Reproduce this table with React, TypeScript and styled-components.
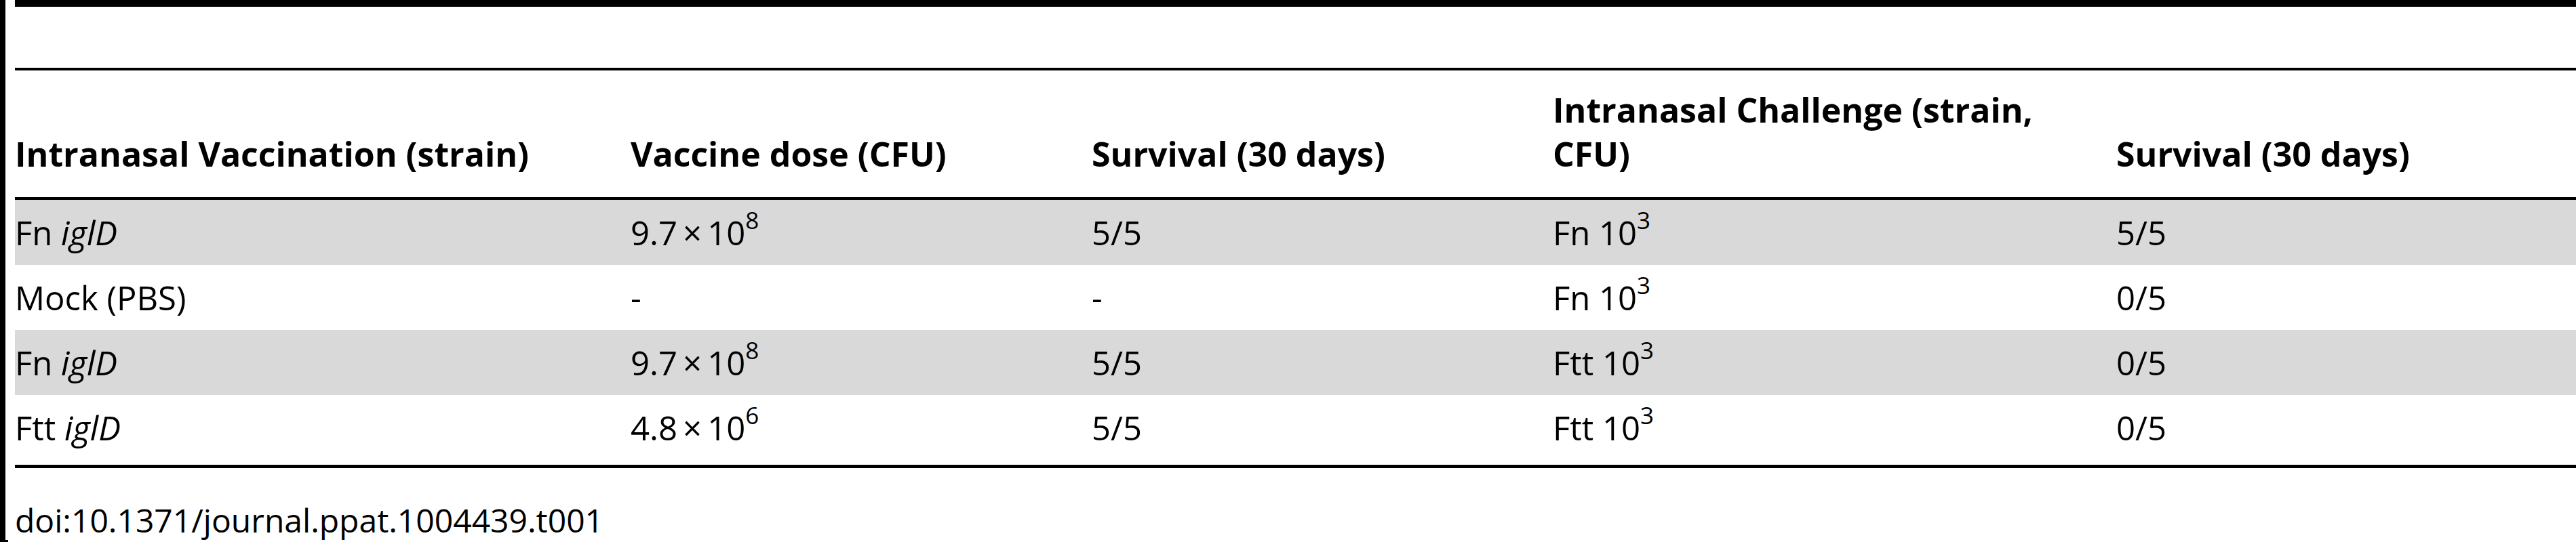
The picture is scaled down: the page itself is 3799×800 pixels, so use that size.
import React from "react";
import styled, { createGlobalStyle } from "styled-components";

const GlobalStyle = createGlobalStyle`
  html, body {
    margin: 0;
    padding: 0;
    background: #ffffff;
    overflow: hidden;
  }
  body {
    font-family: "Open Sans", "Noto Sans", "Liberation Sans", sans-serif;
    color: #000000;
  }
`;

const Page = styled.div`
  display: flex;
  width: 3799px;
  height: 800px;
  overflow: hidden;
  background: #ffffff;
`;

const LeftRule = styled.div`
  display: flex;
  flex-direction: column;
  flex-shrink: 0;
  width: 12px;
  height: 800px;
`;

const RuleBar = styled.div`
  flex: 1;
  width: 8px;
  background: #000000;
`;

const RuleFoot = styled.div`
  width: 12px;
  height: 3px;
  background: #000000;
`;

const Content = styled.div`
  flex: 1;
  display: flex;
  flex-direction: column;
  padding-left: 10px;
  min-width: 0;
`;

const HRule = styled.div<{ $h: number; $gapAfter?: number }>`
  height: ${(p) => p.$h}px;
  background: #000000;
  margin-bottom: ${(p) => p.$gapAfter ?? 0}px;
  flex-shrink: 0;
`;

const cols = "908px 680px 680px 831px 1fr";

const HeaderRow = styled.div`
  display: grid;
  grid-template-columns: ${cols};
  align-items: end;
  height: 193px;
  border-bottom: 4px solid #000000;
`;

const HeaderCell = styled.div<{ $wrap?: boolean }>`
  font-size: 50px;
  font-weight: 700;
  line-height: 65px;
  padding-bottom: 31px;
  padding-right: 100px;
  white-space: ${(p) => (p.$wrap ? "normal" : "nowrap")};
`;

const Body = styled.div`
  display: flex;
  flex-direction: column;
  padding-bottom: 7px;
`;

const BodyRow = styled.div<{ $shaded: boolean }>`
  display: grid;
  grid-template-columns: ${cols};
  align-items: center;
  height: 96px;
  background: ${(p) => (p.$shaded ? "#d9d9d9" : "#ffffff")};
`;

const BodyCell = styled.div`
  font-size: 49px;
  line-height: 49px;
  white-space: nowrap;
`;

const Gene = styled.i`
  font-style: italic;
`;

const Sup = styled.sup`
  font-size: 35px;
  line-height: 0;
  vertical-align: 24px;
`;

const Doi = styled.div`
  margin-top: 45px;
  font-size: 48px;
  line-height: 64px;
  white-space: nowrap;
`;

const Times = "\u2009\u00d7\u2009";

type Row = { shaded: boolean; cells: React.ReactNode[] };

const headers: { label: string; wrap?: boolean }[] = [
  { label: "Intranasal Vaccination (strain)" },
  { label: "Vaccine dose (CFU)" },
  { label: "Survival (30 days)" },
  { label: "Intranasal Challenge (strain, CFU)", wrap: true },
  { label: "Survival (30 days)" },
];

const rows: Row[] = [
  {
    shaded: true,
    cells: [
      <>Fn <Gene>iglD</Gene></>,
      <>9.7{Times}10<Sup>8</Sup></>,
      "5/5",
      <>Fn 10<Sup>3</Sup></>,
      "5/5",
    ],
  },
  {
    shaded: false,
    cells: ["Mock (PBS)", "-", "-", <>Fn 10<Sup>3</Sup></>, "0/5"],
  },
  {
    shaded: true,
    cells: [
      <>Fn <Gene>iglD</Gene></>,
      <>9.7{Times}10<Sup>8</Sup></>,
      "5/5",
      <>Ftt 10<Sup>3</Sup></>,
      "0/5",
    ],
  },
  {
    shaded: false,
    cells: [
      <>Ftt <Gene>iglD</Gene></>,
      <>4.8{Times}10<Sup>6</Sup></>,
      "5/5",
      <>Ftt 10<Sup>3</Sup></>,
      "0/5",
    ],
  },
];

export default function App() {
  return (
    <>
      <GlobalStyle />
      <Page>
        <LeftRule>
          <RuleBar />
          <RuleFoot />
        </LeftRule>
        <Content>
          <HRule $h={10} $gapAfter={90} />
          <HRule $h={4} />
          <HeaderRow>
            {headers.map((h, i) => (
              <HeaderCell key={i} $wrap={h.wrap}>
                {h.label}
              </HeaderCell>
            ))}
          </HeaderRow>
          <Body>
            {rows.map((r, i) => (
              <BodyRow key={i} $shaded={r.shaded}>
                {r.cells.map((c, j) => (
                  <BodyCell key={j}>{c}</BodyCell>
                ))}
              </BodyRow>
            ))}
          </Body>
          <HRule $h={5} />
          <Doi>doi:10.1371/journal.ppat.1004439.t001</Doi>
        </Content>
      </Page>
    </>
  );
}
